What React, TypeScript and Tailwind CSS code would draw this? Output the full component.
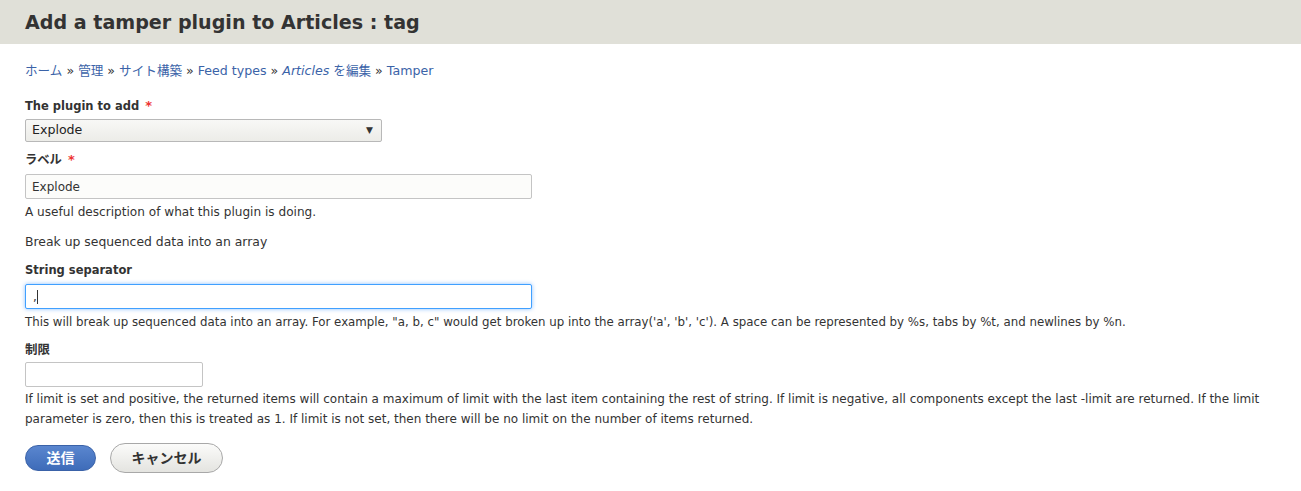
import React from "react";

const font = { fontFamily: '"DejaVu Sans", "Noto Sans CJK JP", sans-serif' };

function Req() {
  return <span className="text-[#e33] ml-[6px] text-[13px] leading-none">*</span>;
}

export default function App() {
  return (
    <div className="min-h-[491px] bg-white text-[#333] text-[11.8px]" style={font}>
      <div className="h-[44px] bg-[#e0e0d8] px-[25px] flex items-center">
        <h1 className="text-[19.1px] font-bold text-[#333] leading-none pt-[2px]">Add a tamper plugin to Articles : tag</h1>
      </div>
      <div className="px-[25px]">
        <div className="pt-[18px] text-[12.6px] text-[#3b63a8] leading-[18px]">
          <span>ホーム</span> <span className="text-[#333]">»</span> <span>管理</span> <span className="text-[#333]">»</span> <span>サイト構築</span> <span className="text-[#333]">»</span> <span>Feed types</span> <span className="text-[#333]">»</span> <span><i>Articles</i> を編集</span> <span className="text-[#333]">»</span> <span>Tamper</span>
        </div>
        <div className="mt-[18px]">
          <label className="block font-bold leading-[16px] text-[11.5px]">The plugin to add<Req /></label>
          <div className="mt-[5px] w-[357px] h-[23px] border border-[#b8b8b8] rounded-[2px] bg-gradient-to-b from-[#f8f8f6] to-[#ecece8] flex items-center justify-between pl-[6px] pr-[8px] text-[12.6px] text-[#222]">
            <span>Explode</span>
            <span className="text-[9px] text-[#333]">▼</span>
          </div>
        </div>
        <div className="mt-[10px]">
          <label className="block font-bold leading-[16px] text-[12.3px]">ラベル<Req /></label>
          <div className="mt-[6px] w-[507px] h-[25px] border border-[#c4c4c4] rounded-[2px] bg-[#fcfcfa] flex items-center pl-[6px] text-[12px] text-[#333]">Explode</div>
          <div className="mt-[4px] leading-[18px] text-[12.1px]">A useful description of what this plugin is doing.</div>
        </div>
        <div className="mt-[12px] leading-[18px] text-[12.4px]">Break up sequenced data into an array</div>
        <div className="mt-[11px]">
          <label className="block font-bold leading-[16px] text-[11.5px]">String separator</label>
          <div className="mt-[6px] w-[507px] h-[25px] border border-[#40a0ff] rounded-[2px] bg-white shadow-[0_0_4px_rgba(64,150,255,0.6)] flex items-center pl-[7px] text-[12px] text-[#333]">
            <span>,</span><span className="inline-block w-[1px] h-[14px] bg-[#333]"></span>
          </div>
          <div className="mt-[4px] leading-[18px]">This will break up sequenced data into an array. For example, "a, b, c" would get broken up into the array('a', 'b', 'c'). A space can be represented by %s, tabs by %t, and newlines by %n.</div>
        </div>
        <div className="mt-[11px]">
          <label className="block font-bold leading-[16px] text-[12.5px]">制限</label>
          <div className="mt-[4px] w-[178px] h-[25px] border border-[#c4c4c4] rounded-[2px] bg-white"></div>
          <div className="mt-[2px] leading-[20px] text-[12px]">If limit is set and positive, the returned items will contain a maximum of limit with the last item containing the rest of string. If limit is negative, all components except the last -limit are returned. If the limit parameter is zero, then this is treated as 1. If limit is not set, then there will be no limit on the number of items returned.</div>
        </div>
        <div className="mt-[14px] flex items-center gap-[14px]">
          <button className="w-[71px] h-[26px] rounded-full bg-gradient-to-b from-[#5a86cf] to-[#3e6cb9] border border-[#3a62a8] text-white font-bold text-[14px]">送信</button>
          <button className="w-[113px] h-[30px] rounded-full bg-gradient-to-b from-[#fbfbfa] to-[#e4e4e0] border border-[#a8a8a8] text-[#333] font-bold text-[14px]">キャンセル</button>
        </div>
      </div>
    </div>
  );
}
